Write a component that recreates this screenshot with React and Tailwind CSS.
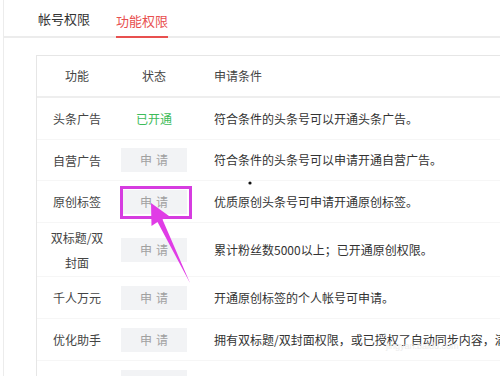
import React from "react";

const font = { fontFamily: '"Noto Sans CJK SC", "Noto Sans", "Liberation Sans", sans-serif' };

function ApplyBtn() {
  return (
    <div className="w-[66px] h-[24px] bg-[#f2f3f5] text-[#a0a0a0] text-[12px] flex items-center justify-center tracking-[4px] pl-[4px]">
      申请
    </div>
  );
}

const rows = [
  { name: ["头条广告"], status: "open", cond: "符合条件的头条号可以开通头条广告。", h: "h-[42px]" },
  { name: ["自营广告"], status: "btn", cond: "符合条件的头条号可以申请开通自营广告。", h: "h-[41px]" },
  { name: ["原创标签"], status: "btn", cond: "优质原创头条号可申请开通原创标签。", h: "h-[42px]" },
  { name: ["双标题/双", "封面"], status: "btn", cond: "累计粉丝数5000以上；已开通原创权限。", h: "h-[54px]" },
  { name: ["千人万元"], status: "btn", cond: "开通原创标签的个人帐号可申请。", h: "h-[42px]" },
  { name: ["优化助手"], status: "btn", cond: "拥有双标题/双封面权限，或已授权了自动同步内容，满足", h: "h-[42px]" },
  { name: ["小号"], status: "btn", cond: "符合条件的头条号，可以申请开通该功能。", h: "h-[42px]" },
];

export default function App() {
  return (
    <div className="w-[500px] h-[376px] overflow-hidden bg-white relative" style={font}>
      <div className="ml-[3px] border-l border-[#ececec] h-full">
        {/* tabs */}
        <div className="h-[38px] border-b-2 border-[#ececec] flex items-end pl-[34px] gap-[26px] text-[13px]">
          <div className="h-[36px] flex items-center text-[#333] pt-[2px]">帐号权限</div>
          <div className="h-[36px] flex items-center text-[#e8504f] border-b-2 border-[#e8504f] pt-[4px] -mb-[2px]">
            功能权限
          </div>
        </div>
        {/* card */}
        <div className="mt-[17px] ml-[32px] border-l border-t border-[#e6e6e6]">
          <div className="grid grid-cols-[78px_78px_1fr] h-[42px] items-center border-b-2 border-[#eeeeee] text-[12px] text-[#444]">
            <div className="text-center pl-[2px]">功能</div>
            <div className="text-center">状态</div>
            <div className="pl-[21px]">申请条件</div>
          </div>
          {rows.map((r, i) => (
            <div
              key={i}
              className={`grid grid-cols-[78px_78px_1fr] items-center border-b border-[#f6f6f6] text-[12px] ${r.h}`}
            >
              <div className="text-center text-[#444] leading-[25px] pl-[2px]">
                {r.name.map((n, j) => (
                  <div key={j}>{n}</div>
                ))}
              </div>
              <div className="flex justify-center">
                {r.status === "open" ? (
                  <span className="text-[#3dbb5a]">已开通</span>
                ) : (
                  <ApplyBtn />
                )}
              </div>
              <div className="pl-[21px] text-[#333] whitespace-nowrap overflow-hidden">{r.cond}</div>
            </div>
          ))}
        </div>
      </div>

      {/* annotation: highlight box */}
      <div className="absolute left-[120px] top-[186px] w-[72px] h-[33px] border-[3px] border-[#d63ce0]" />
      {/* arrow */}
      <svg className="absolute left-0 top-0" width="500" height="376" viewBox="0 0 500 376">
        <polygon
          points="151,203 169,216 162.5,219.5 190,283 157.5,222 151.5,226"
          fill="#e03ce6"
        />
        <circle cx="250" cy="183" r="1.6" fill="#111" />
      </svg>
      {/* faint watermark */}
      <div className="absolute left-[386px] top-[342px] text-[#ececec] text-[9px] leading-none" style={{ fontFamily: '"Liberation Sans", sans-serif' }}>
        jingyan.baidu.com
      </div>
    </div>
  );
}
